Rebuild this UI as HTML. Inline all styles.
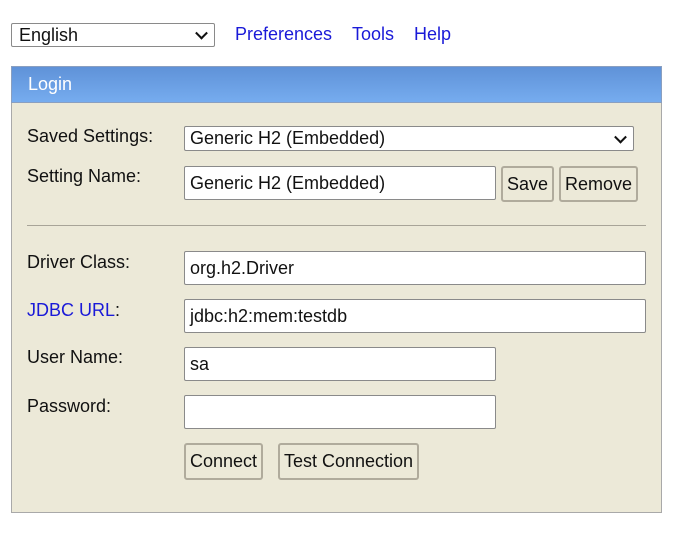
<!DOCTYPE html>
<html><head><style>
body{margin:0;width:676px;height:537px;background:#fff;font-family:"Liberation Sans",Arial,sans-serif;font-size:18px;color:#111;position:relative;overflow:hidden}
.a{position:absolute;box-sizing:border-box}
.inp{background:#fff;border:1px solid #8a8a8a;padding-left:5px;display:flex;align-items:center;border-radius:2px;white-space:nowrap}
.btn{background:#ece9d8;border:2px solid #b0ab9c;border-radius:3px;display:flex;align-items:center;justify-content:center;white-space:nowrap}
.lbl{line-height:20px;white-space:nowrap}
.lnk{color:#1a1ad8}
.chev{position:absolute;right:8px;top:50%;width:7px;height:7px;border-right:2px solid #111;border-bottom:2px solid #111;transform:translateY(-70%) rotate(45deg)}
</style></head><body>
<div class="a inp" style="left:11px;top:23px;width:204px;height:24px;padding-left:7px">English<span class="chev"></span></div>
<div class="a lnk lbl" style="left:235px;top:24px">Preferences</div>
<div class="a lnk lbl" style="left:352px;top:24px">Tools</div>
<div class="a lnk lbl" style="left:414px;top:24px">Help</div>
<div class="a" style="left:11px;top:66px;width:651px;height:447px;background:#ece9d8;border:1px solid #a9a9a9"></div>
<div class="a" style="left:11px;top:66px;width:651px;height:37px;background:linear-gradient(#5f92d8,#76acef);border:1px solid #8a9fc0;color:#fff;padding:7px 0 0 16px">Login</div>
<div class="a lbl" style="left:27px;top:126px">Saved Settings:</div>
<div class="a lbl" style="left:27px;top:166px">Setting Name:</div>
<div class="a lbl" style="left:27px;top:252px">Driver Class:</div>
<div class="a lbl" style="left:27px;top:300px"><span class="lnk">JDBC URL</span>:</div>
<div class="a lbl" style="left:27px;top:347px">User Name:</div>
<div class="a lbl" style="left:27px;top:396px">Password:</div>
<div class="a inp" style="left:184px;top:126px;width:450px;height:25px">Generic H2 (Embedded)<span class="chev"></span></div>
<div class="a inp" style="left:184px;top:166px;width:312px;height:34px">Generic H2 (Embedded)</div>
<div class="a btn" style="left:501px;top:166px;width:53px;height:36px">Save</div>
<div class="a btn" style="left:559px;top:166px;width:79px;height:36px">Remove</div>
<div class="a" style="left:27px;top:225px;width:619px;height:1px;background:#a8a498"></div>
<div class="a inp" style="left:184px;top:251px;width:462px;height:34px">org.h2.Driver</div>
<div class="a inp" style="left:184px;top:299px;width:462px;height:34px">jdbc:h2:mem:testdb</div>
<div class="a inp" style="left:184px;top:347px;width:312px;height:34px">sa</div>
<div class="a inp" style="left:184px;top:395px;width:312px;height:34px"></div>
<div class="a btn" style="left:184px;top:443px;width:79px;height:37px">Connect</div>
<div class="a btn" style="left:278px;top:443px;width:141px;height:37px">Test Connection</div>
</body></html>
